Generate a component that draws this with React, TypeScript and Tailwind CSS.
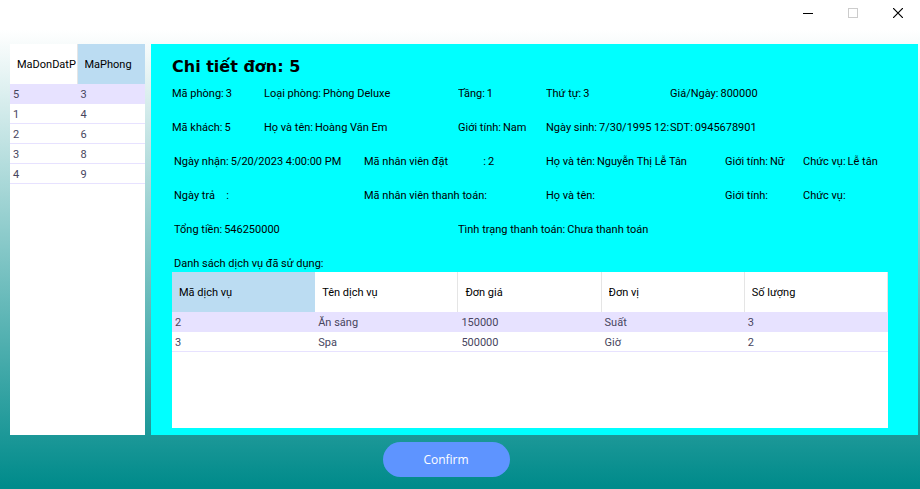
import type { ReactNode } from "react";

type FieldProps = { label: ReactNode; value?: string; className: string; wide?: boolean };

function Field({ label, value, className, wide }: FieldProps) {
  return (
    <div className={`flex min-w-0 gap-0.5 overflow-hidden whitespace-nowrap ${className}`}>
      <dt className={wide ? "flex w-[122px] shrink-0 justify-between" : "shrink-0"}>{label}</dt>
      <dd>{value}</dd>
    </div>
  );
}

function Row({ children, indent }: { children: ReactNode; indent?: boolean }) {
  return (
    <div
      className={`grid h-[34px] grid-cols-[92fr_100fr_94fr_88fr_124fr_55fr_78fr_85fr] items-center ${
        indent ? "[&>*:first-child]:pl-0.5" : ""
      }`}
    >
      {children}
    </div>
  );
}

type TableProps = { columns: string[]; rows: string[][]; active: number; label: string };

function DataTable({ columns, rows, active, label }: TableProps) {
  return (
    <table aria-label={label} className="w-full table-fixed border-separate border-spacing-0 text-left">
      <thead>
        <tr className="h-10">
          {columns.map((c, i) => (
            <th
              key={c}
              scope="col"
              className={`border-r p-0 pt-0.5 pl-[7px] font-normal text-black ${
                i === active ? "border-[#bbdcf2] bg-[#bbdcf2]" : "border-[#e5e5e5] bg-white"
              }`}
            >
              <span className="block overflow-hidden whitespace-nowrap">{c}</span>
            </th>
          ))}
        </tr>
      </thead>
      <tbody className="text-[#47455e]">
        {rows.map((r, i) => (
          <tr key={r[0]} className={`h-5 ${i === 0 ? "bg-[#e7e2ff]" : "bg-white"}`}>
            {r.map((cell, j) => (
              <td key={j} className="border-b border-[#e7e2ff] p-0 pt-0.5 pl-[3px]">
                {cell}
              </td>
            ))}
          </tr>
        ))}
      </tbody>
    </table>
  );
}

const bookings = [
  ["5", "3"],
  ["1", "4"],
  ["2", "6"],
  ["3", "8"],
  ["4", "9"],
];

const services = [
  ["2", "Ăn sáng", "150000", "Suất", "3"],
  ["3", "Spa", "500000", "Giờ", "2"],
];

export default function App() {
  return (
    <div className="flex min-h-screen flex-col bg-[linear-gradient(to_bottom,#ffffff_30px,#008b8b_calc(100%-3px))] font-[Roboto,sans-serif] text-[11px] leading-4 text-black">
      <header className="flex h-[26px] shrink-0 justify-end bg-white">
        <button aria-label="Minimize" className="flex w-[45px] items-center justify-center">
          <svg width="10" height="10" shapeRendering="crispEdges">
            <path d="M0 5.5h10" stroke="#000" />
          </svg>
        </button>
        <button aria-label="Maximize" disabled className="flex w-[45px] items-center justify-center">
          <svg width="10" height="10" shapeRendering="crispEdges">
            <path d="M.5.5h9v9h-9z" fill="none" stroke="#ccc" />
          </svg>
        </button>
        <button aria-label="Close" className="flex w-[45px] items-center justify-center">
          <svg width="10" height="10">
            <path d="M0 0l10 10M10 0L0 10" stroke="#000" strokeWidth="1.2" />
          </svg>
        </button>
      </header>

      <main className="mt-[18px] mr-0.5 ml-2.5 flex flex-1 gap-1.5">
        <aside className="w-[135px] shrink-0 bg-white">
          <DataTable label="Đơn đặt phòng" columns={["MaDonDatP", "MaPhong"]} rows={bookings} active={1} />
        </aside>

        <section className="flex min-w-0 flex-1 flex-col bg-[#00ffff] pt-[13px] pr-[30px] pb-[7px] pl-[21px]">
          <h1 className="font-['DejaVu_Sans',sans-serif] text-[16px] leading-5 font-bold">Chi tiết đơn: 5</h1>
          <dl>
            <Row>
              <Field label="Mã phòng:" value="3" className="col-start-1" />
              <Field label="Loại phòng:" value="Phòng Deluxe" className="col-span-2 col-start-2" />
              <Field label="Tầng:" value="1" className="col-start-4" />
              <Field label="Thứ tự:" value="3" className="col-start-5" />
              <Field label="Giá/Ngày:" value="800000" className="col-span-3 col-start-6" />
            </Row>
            <Row>
              <Field label="Mã khách:" value="5" className="col-start-1" />
              <Field label="Họ và tên:" value="Hoàng Văn Em" className="col-span-2 col-start-2" />
              <Field label="Giới tính:" value="Nam" className="col-start-4" />
              <Field label="Ngày sinh:" value="7/30/1995 12:" className="col-start-5" />
              <Field label="SDT:" value="0945678901" className="col-span-3 col-start-6" />
            </Row>
            <Row indent>
              <Field label="Ngày nhận:" value="5/20/2023 4:00:00 PM" className="col-span-2 col-start-1" />
              <Field
                wide
                label={
                  <>
                    <span>Mã nhân viên đặt</span>
                    <span>:</span>
                  </>
                }
                value="2"
                className="col-span-2 col-start-3"
              />
              <Field label="Họ và tên:" value="Nguyễn Thị Lễ Tân" className="col-span-2 col-start-5" />
              <Field label="Giới tính:" value="Nữ" className="col-start-7" />
              <Field label="Chức vụ:" value="Lễ tân" className="col-start-8" />
            </Row>
            <Row indent>
              <Field
                label={
                  <span className="flex w-[55px] justify-between">
                    <span>Ngày trả</span>
                    <span>:</span>
                  </span>
                }
                className="col-span-2 col-start-1"
              />
              <Field wide label="Mã nhân viên thanh toán:" className="col-span-2 col-start-3" />
              <Field label="Họ và tên:" className="col-span-2 col-start-5" />
              <Field label="Giới tính:" className="col-start-7" />
              <Field label="Chức vụ:" className="col-start-8" />
            </Row>
            <Row indent>
              <Field label="Tổng tiền:" value="546250000" className="col-span-3 col-start-1" />
              <Field label="Tình trạng thanh toán:" value="Chưa thanh toán" className="col-span-5 col-start-4" />
            </Row>
          </dl>
          <h2 className="mt-[9px] pl-0.5">Danh sách dịch vụ đã sử dụng:</h2>
          <div className="flex-1 bg-white">
            <DataTable
              label="Dịch vụ đã sử dụng"
              columns={["Mã dịch vụ", "Tên dịch vụ", "Đơn giá", "Đơn vị", "Số lượng"]}
              rows={services}
              active={0}
            />
          </div>
        </section>
      </main>

      <footer className="flex h-[54px] shrink-0 justify-center pt-[7px] pr-7">
        <button className="h-[35px] w-[127px] rounded-full bg-[#5e94ff] font-['Open_Sans',sans-serif] text-[12px] text-white">
          Confirm
        </button>
      </footer>
    </div>
  );
}
